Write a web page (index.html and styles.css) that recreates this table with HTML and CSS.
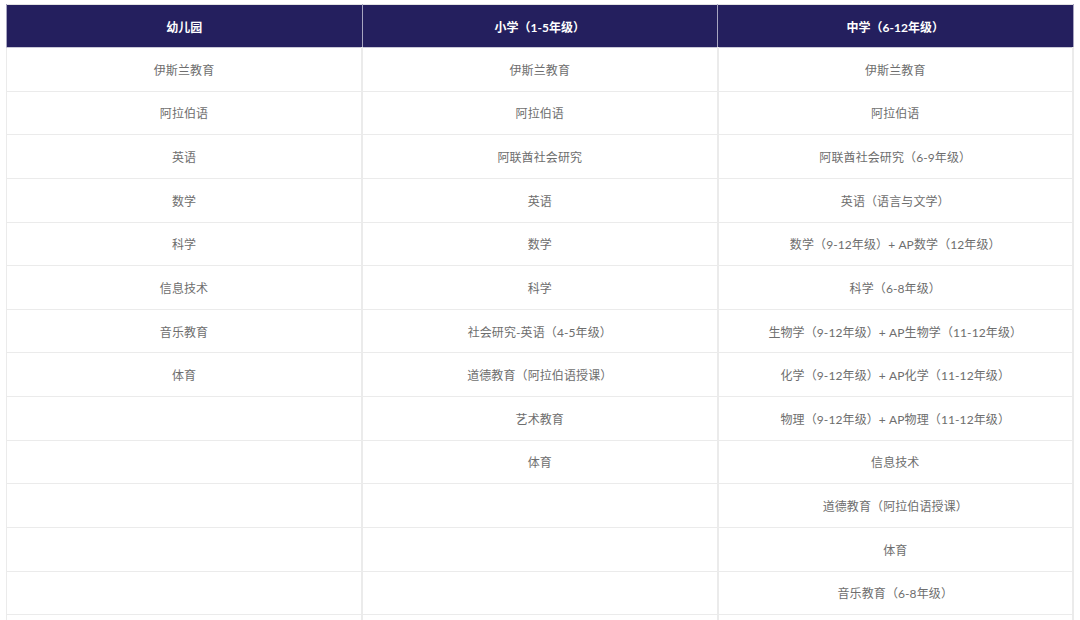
FILE: index.html
```html
<!DOCTYPE html>
<html lang="zh">
<head>
<meta charset="utf-8">
<title>课程设置</title>
<link rel="stylesheet" href="styles.css">
</head>
<body>
<div class="wrap">
<table class="curriculum">
  <thead>
    <tr><th>幼儿园</th><th>小学（1-5年级）</th><th>中学（6-12年级）</th></tr>
  </thead>
  <tbody>
    <tr><td>伊斯兰教育</td><td>伊斯兰教育</td><td>伊斯兰教育</td></tr>
    <tr><td>阿拉伯语</td><td>阿拉伯语</td><td>阿拉伯语</td></tr>
    <tr><td>英语</td><td>阿联酋社会研究</td><td>阿联酋社会研究（6-9年级）</td></tr>
    <tr><td>数学</td><td>英语</td><td>英语（语言与文学）</td></tr>
    <tr><td>科学</td><td>数学</td><td>数学（9-12年级）+ AP数学（12年级）</td></tr>
    <tr><td>信息技术</td><td>科学</td><td>科学（6-8年级）</td></tr>
    <tr><td>音乐教育</td><td>社会研究-英语（4-5年级）</td><td>生物学（9-12年级）+ AP生物学（11-12年级）</td></tr>
    <tr><td>体育</td><td>道德教育（阿拉伯语授课）</td><td>化学（9-12年级）+ AP化学（11-12年级）</td></tr>
    <tr><td></td><td>艺术教育</td><td>物理（9-12年级）+ AP物理（11-12年级）</td></tr>
    <tr><td></td><td>体育</td><td>信息技术</td></tr>
    <tr><td></td><td></td><td>道德教育（阿拉伯语授课）</td></tr>
    <tr><td></td><td></td><td>体育</td></tr>
    <tr><td></td><td></td><td>音乐教育（6-8年级）</td></tr>
    <tr><td></td><td></td><td></td></tr>
  </tbody>
</table>
</div>
</body>
</html>
```
FILE: styles.css
```css
html, body {
  margin: 0;
  padding: 0;
  background: #ffffff;
}
.wrap {
  padding: 4px 6px 0 6px;
}
.curriculum {
  width: 1068px;
  border-collapse: collapse;
  table-layout: fixed;
  font-family: Lato, "Noto Sans CJK SC", sans-serif;
  font-size: 12px;
  border: 1px solid #e3e3e3;
}
.curriculum th {
  background: #241f5e;
  color: #ffffff;
  font-weight: 700;
  height: 42px;
  padding: 0;
  text-align: center;
  border-left: 1px solid #a7a5c0;
  border-right: 1px solid #a7a5c0;
  border-bottom: 1px solid #c9c8d8;
}
.curriculum td {
  color: #6e6e6e;
  height: 42.63px;
  padding: 0;
  text-align: center;
  letter-spacing: 0.1px;
  border: 1px solid #ebebeb;
  border-right-width: 2px;
}
```
